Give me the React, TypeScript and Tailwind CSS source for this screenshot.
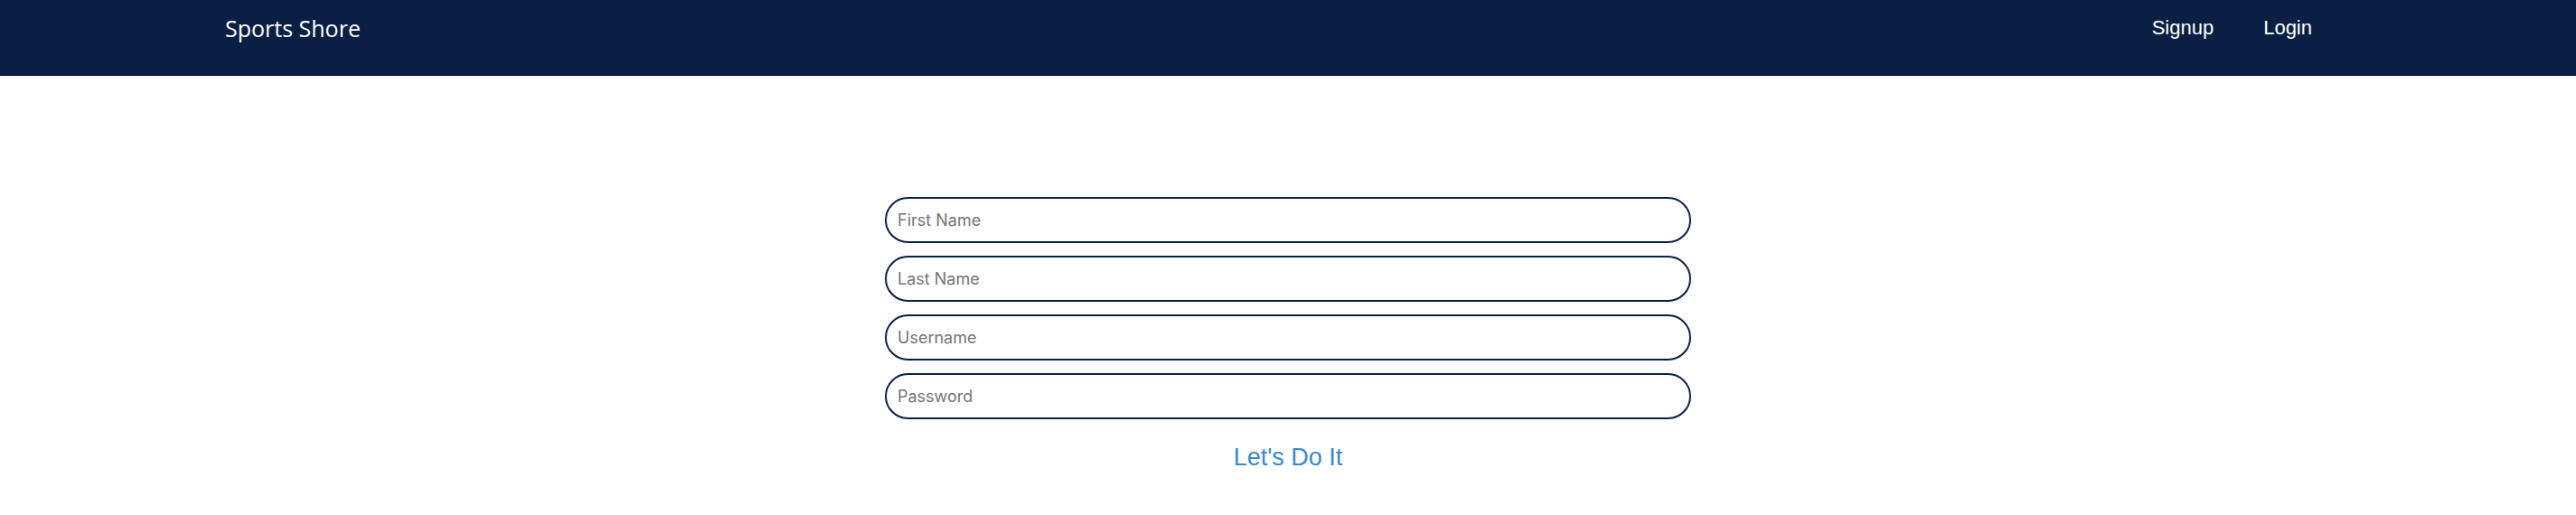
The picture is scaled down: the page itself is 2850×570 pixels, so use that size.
export default function App() {
  const fields = ['First Name', 'Last Name', 'Username', 'Password']

  return (
    <div className="min-h-screen bg-white">
      {/* Navbar */}
      <nav className="h-[84px] bg-[#0a1f44] flex items-start justify-between pl-[249px] pr-[292px]">
        <span className="mt-[14px] text-white text-[25px] leading-[34px] font-['Open_Sans',sans-serif]">
          Sports Shore
        </span>
        <div className="flex gap-[55px] mt-[17px] text-white text-[22px] leading-[28px] font-['Liberation_Sans',Arial,sans-serif]">
          <a href="#signup">Signup</a>
          <a href="#login">Login</a>
        </div>
      </nav>

      {/* Signup form */}
      <form className="w-[892px] mx-auto mt-[134px] flex flex-col items-center" onSubmit={(e) => e.preventDefault()}>
        {fields.map((f) => (
          <input
            key={f}
            type={f === 'Password' ? 'password' : 'text'}
            placeholder={f}
            className="w-full h-[51px] mb-[14px] rounded-full border-2 border-[#0a1f44] px-[12px] text-[18px] font-['Inter',sans-serif] placeholder:text-[#757575] outline-none"
          />
        ))}
        <button
          type="submit"
          className="mt-[11px] text-[#3a88cf] text-[27px] leading-[34px] font-['Liberation_Sans',Arial,sans-serif]"
        >
          Let's Do It
        </button>
      </form>
    </div>
  )
}
